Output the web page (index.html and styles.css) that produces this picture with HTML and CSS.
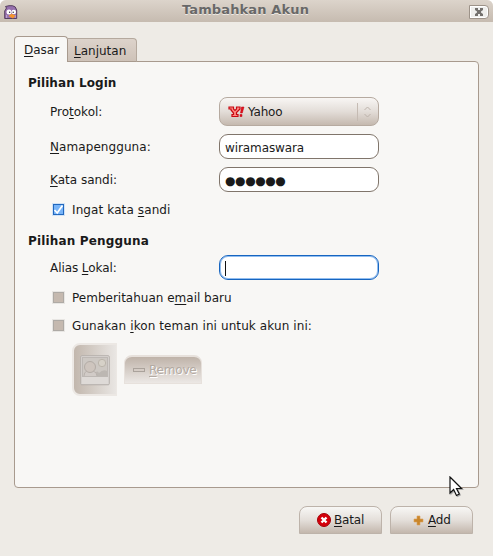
FILE: index.html
```html
<!DOCTYPE html>
<html lang="id">
<head>
<meta charset="utf-8">
<title>Tambahkan Akun</title>
<link rel="stylesheet" href="styles.css">
</head>
<body>
<div class="window">
  <header class="titlebar">
    <svg class="app-icon" width="15" height="15" viewBox="0 0 15 15">
      <path d="M.7 13.5V6L2.5 3L1.5 1.5L5 .7H8.5Q11.8 1 12.7 5V13.5Z" fill="#9670ad" stroke="#4c3457" stroke-width=".9"/>
      <path d="M2.6 13V10M11.2 13V10" stroke="#c2a8cf"/>
      <circle cx="5" cy="7" r="2.5" fill="#fff"/><circle cx="9.8" cy="7" r="2.3" fill="#fff"/>
      <circle cx="5.7" cy="7.2" r=".7" fill="#242028"/><circle cx="9.2" cy="7.2" r=".7" fill="#242028"/>
      <path d="M4.5 11L7.5 8.8L11.5 10.5L9 13.5Z" fill="#f5962c"/>
    </svg>
    <h1>Tambahkan Akun</h1>
    <button class="close" aria-label="Tutup"><svg width="18" height="12" viewBox="0 0 18 12"><path d="M5 2H8V4H10V2H13V4L11 5.5V6.5L13 8V10H10V8H8V10H5V8L7 6.5V5.5L5 4Z" fill="#74716e"/></svg></button>
  </header>
  <main>
    <nav class="tabs">
      <div class="tab active"><u>D</u>asar</div>
      <div class="tab"><u>L</u>anjutan</div>
    </nav>
    <section class="panel">
      <h2>Pilihan Login</h2>
      <div class="field protocol"><label>Pro<u>t</u>okol:</label>
        <div class="combo">
          <svg width="17" height="12" viewBox="0 0 17 12"><path d="M1 1H5.5V3L7 4.5L8.5 3V1H12V3L8.5 6.5V8.5H10V10.5H4V8.5H5.5V7L3 4V3H1Z" fill="#ff8880" stroke="#c70812" stroke-width="1.2"/><path d="M13.5 1H16L14.3 7H12.5ZM12 8.5H14V10.5H12Z" fill="#e8101c" stroke="#b70010" stroke-width=".5"/></svg>
          <span>Yahoo</span><i class="separator"></i>
          <svg class="arrows" width="9" height="12" viewBox="0 0 9 12"><path d="M1.5 4L4.5 1L7.5 4M1.5 8L4.5 11L7.5 8" fill="none" stroke="#bcb2aa"/></svg>
        </div></div>
      <div class="field name"><label><u>N</u>amapengguna:</label><div class="entry">wiramaswara</div></div>
      <div class="field pass"><label><u>K</u>ata sandi:</label><div class="entry password"><span>●●●●●●</span></div></div>
      <div class="option remember"><i class="box checked"><svg width="11" height="11" viewBox="0 0 11 11"><path d="M1.5 6L4.2 9L9.5 1.5" fill="none" stroke="#fff" stroke-width="1.7"/></svg></i><label>Ingat kata <u>s</u>andi</label></div>
      <h2 class="user">Pilihan Pengguna</h2>
      <div class="field alias"><label>Alias <u>L</u>okal:</label><div class="entry focus"><i class="caret"></i></div></div>
      <div class="option mail"><i class="box"></i><label>Pemberitahuan e<u>m</u>ail baru</label></div>
      <div class="option buddy"><i class="box"></i><label><span>Gunakan </span><u>i</u>kon teman ini untuk akun ini:</label></div>
      <div class="icon-actions">
        <div class="picture"><svg width="30" height="31" viewBox="0 0 30 31">
          <rect x=".75" y=".75" width="28.5" height="29" rx="1" fill="#dedad7" stroke="#b2ada9"/>
          <rect x="2.5" y="2.5" width="25" height="19" fill="#cdc8c3" stroke="#bdb8b4"/>
          <path d="M15 21Q16 14 19 18Q23 14 27 16V21Z" fill="#bcb7b2"/>
          <path d="M4 21Q4 17 7 16H13Q17 17 17 21" fill="#d1cbc7" stroke="#b9b2ad"/>
          <circle cx="10" cy="12" r="5.5" fill="#cec5be" stroke="#b3aca6"/>
          <circle cx="22" cy="8" r="3.7" fill="#d6d1c8" stroke="#bbb5ab"/>
          <path d="M2 22H28V29H2Z" fill="#dedad7"/>
        </svg></div>
        <div class="remove"><i></i><span><u>R</u>emove</span></div>
      </div>
    </section>
    <footer>
      <div class="button"><svg width="14" height="14" viewBox="0 0 14 14"><circle cx="7" cy="7" r="6.5" fill="#d4000b" stroke="#a40007"/><path d="M4.5 4.5L9.5 9.5M9.5 4.5L4.5 9.5" stroke="#fff" stroke-width="2.4"/></svg><span><u>B</u>atal</span></div>
      <div class="button add"><svg width="11" height="11" viewBox="0 0 11 11"><path d="M4 1H7V4H10V7H7V10H4V7H1V4H4Z" fill="#c9862b" stroke="#dba35a" stroke-width=".6"/></svg><span><u>A</u>dd</span></div>
    </footer>
  </main>
  <svg class="pointer" width="14" height="21" viewBox="0 0 14 21"><path d="M1 1V17L4.6 13.5L7.5 19.5L10.3 18.1L7.5 12.5H12.5Z" fill="#fff" stroke="#111" stroke-width="1.2"/></svg>
</div>
</body>
</html>
```
FILE: styles.css
```css
* { box-sizing: border-box; }
body { margin: 0; background: #fff; font: 12px/16px "DejaVu Sans", sans-serif; color: #1a1a1a; }
.window { width: 493px; height: 556px; background: #eeebe6; border-radius: 6px 6px 0 0; position: relative; overflow: hidden; }
.titlebar { height: 22px; display: grid; grid-template-columns: 20px 1fr 20px; padding: 0 4px 0 4px; background: linear-gradient(#dcd4cb, #c6bbb0); }
.app-icon { margin-top: 5px; }
h1 { margin: 2px 2px 0 0; font-size: 13px; line-height: 16px; letter-spacing: .13px; text-align: center; color: #686868; text-shadow: 0 1px #eee9e3; white-space: nowrap; }
.close { width: 20px; height: 14px; margin-top: 5px; padding: 0; border: 1px solid #9d9389; border-radius: 0 4px 4px 0; background: #efefed; box-shadow: inset 0 0 0 1px #fff; display: flex; }
main { padding: 14px 14px 0; }
.tabs { display: flex; align-items: flex-end; height: 26px; position: relative; z-index: 1; }
.tab { height: 24px; width: 69px; border: 1px solid #b5a99e; border-left: 0; border-bottom-color: #a89a8e; border-radius: 0 4px 0 0; background: linear-gradient(#ddd3cb, #cec2b8); padding: 4px 0 0 6px; white-space: nowrap; }
.tab.active { height: 26px; width: 54px; border: 1px solid #a89a8e; border-bottom: 0; border-radius: 4px 4px 0 0; background: #f8f7f5; padding: 5px 0 0 9px; }
.panel { margin-top: -1px; height: 427px; border: 1px solid #a89a8e; border-radius: 0 4px 4px 4px; background: #f8f7f5; padding: 13px 13px 0; }
h2 { margin: 0; font-size: 12px; line-height: 16px; height: 22px; white-space: nowrap; letter-spacing: .06px; }
u { text-decoration: underline; text-underline-offset: 2px; text-decoration-thickness: 1px; }
.field { display: grid; grid-template-columns: 169px 160px; margin-left: 22px; align-items: center; }
.protocol { height: 29px; }
.name { height: 25px; margin-top: 8px; }
.name label { letter-spacing: .08px; }
.pass { height: 25px; margin-top: 8px; }
.combo { height: 29px; display: flex; align-items: center; border: 1px solid #b6aaa0; border-radius: 8px; padding-left: 8px; background: linear-gradient(#f8f6f4, #e3ddd8 50%, #c5b9af); }
.combo span { margin-left: 3px; letter-spacing: -.2px; }
.separator { width: 1px; height: 18px; background: #c5bbb3; margin-left: auto; }
.arrows { margin: 0 6px 0 5px; }
.entry { height: 25px; padding: 5px 0 0 5px; border: 1px solid #80756b; border-radius: 9px; background: #fff; line-height: 16px; }
.name .entry { letter-spacing: -.1px; }
.password { overflow: hidden; }
.password span { font-size: 12px; letter-spacing: -.4px; }
.focus { border: 1px solid #1765c0; box-shadow: inset 0 0 0 1px #92bef0; }
.caret { display: block; width: 1px; height: 15px; background: #111; }
.option { display: flex; align-items: center; height: 16px; margin-left: 25px; }
.option label { padding-top: 2px; }
.remember { margin-top: 9px; letter-spacing: .11px; }
.box { width: 11px; height: 11px; background: #c5b9af; border: 1px solid #aeaaa5; box-shadow: 0 0 0 1px #e8e6e3; margin-right: 8px; display: flex; }
.checked { background: #78b4f8; border-color: #2268be; box-shadow: 0 0 0 1px #d2e3f5; }
.box svg { flex: none; margin: -1px; }
.user { height: 16px; margin-top: 16px; letter-spacing: .16px; }
.alias { height: 25px; margin-top: 6px; }
.alias label { letter-spacing: -.08px; }
.mail { margin-top: 9px; }
.buddy { margin-top: 12px; letter-spacing: .1px; }
.buddy span { white-space: pre; }
.icon-actions { display: flex; margin: 10px 0 0 44px; gap: 7px; }
.picture { width: 45px; height: 53px; border: 2px solid #ece8e4; border-right-width: 1px; border-radius: 8px 0 0 8px; background: linear-gradient(90deg, #c2b7ad, #e9e6e3); padding: 10px 0 0 6px; }
.remove { width: 78px; height: 29px; margin-top: 12px; display: flex; border: 1px solid #e7e1dc; border-width: 2px 1px 1px; border-radius: 8px 8px 0 0; background: linear-gradient(#bfb3a9, #ece8e5); color: #b3aaa2; text-shadow: 1px 1px #fff; padding: 5px 0 0 8px; letter-spacing: -.2px; }
.remove i { width: 12px; height: 4px; border: 1px solid #aaa29b; background: #d5ccc5; margin: 6px 4px 0 0; }
footer { display: flex; justify-content: flex-end; gap: 8px; margin: 18px 6px 0 0; }
.button { width: 83px; height: 28px; border: 1px solid #bdb3aa; border-radius: 8px 8px 0 0; background: linear-gradient(#f8f7f5, #e4dfda 50%, #c3b7ad); display: flex; align-items: center; padding-left: 17px; }
.button span { margin-left: 3px; letter-spacing: -.15px; }
.button.add { padding-left: 22px; }
.button.add span { margin-left: 4px; }
.pointer { position: absolute; left: 449px; top: 476px; filter: drop-shadow(1px 1px .5px #aaa); }
```
